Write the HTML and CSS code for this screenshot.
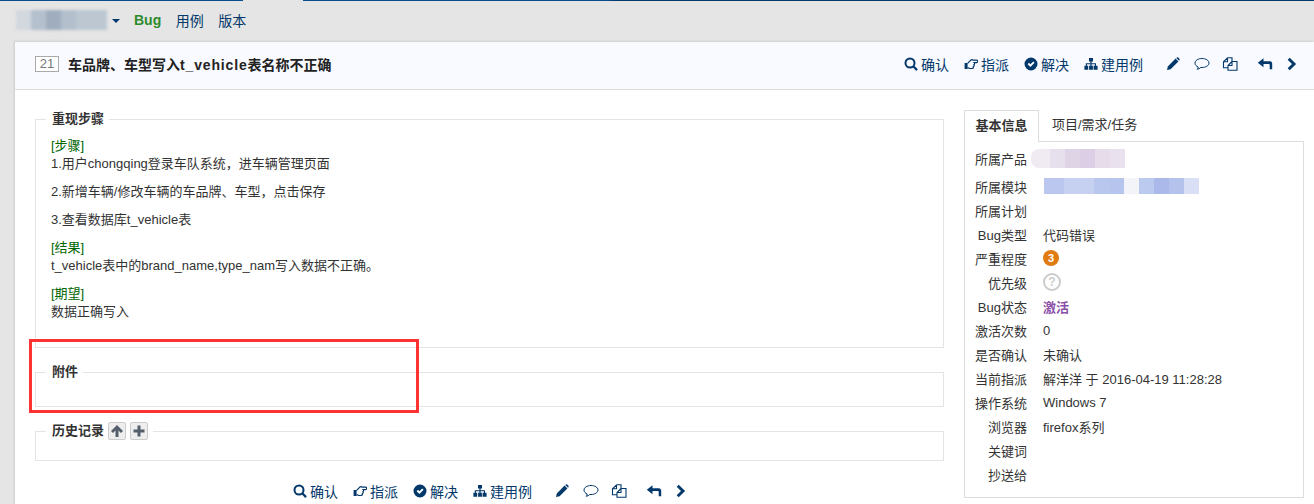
FILE: index.html
```html
<!DOCTYPE html>
<html lang="zh-CN">
<head>
    <meta charset="UTF-8">
    <meta name="viewport" content="width=device-width, initial-scale=1.0">
    <title>车品牌、车型写入t_vehicle表名称不正确</title>
    <link rel="stylesheet" href="styles.css">
</head>
<body>
    <svg class="defs" width="0" height="0">
        <symbol id="i-search" viewBox="0 0 14 14"><path d="M6 .5a5.500 5.500 0 1 0 0 11a5.500 5.500 0 0 0 0-11zm0 2a3.500 3.500 0 1 1 0 7a3.500 3.500 0 0 1 0-7z" fill-rule="evenodd"/><path d="M8.800 10.300l1.500-1.500 3.500 3.500-1.600 1.600z"/></symbol>
        <symbol id="i-hand" viewBox="0 0 14 14"><path d="M.6 6h3v6h-3z"/><path d="M3.600 6.400L6.800 3.200C7.200 2.400 8.500 2.400 9 3.200H12.600C14 3.200 14 5.600 12.600 5.600H10.200C10.800 6.200 10.600 7.300 10 7.600C10.400 8.300 10 9.300 9.400 9.500C9.600 10.500 9 11.500 8 11.500H5.800L3.600 10.600" fill="none" stroke="currentColor" stroke-width="1.200"/></symbol>
        <symbol id="i-check" viewBox="0 0 14 14"><path d="M7 .5a6.500 6.500 0 1 0 0 13a6.500 6.500 0 0 0 0-13zM3.600 7.200l1.400-1.400 1.400 1.400 2.800-2.800 1.400 1.400-4.200 4.200z" fill-rule="evenodd"/></symbol>
        <symbol id="i-sitemap" viewBox="0 0 14 14"><path d="M5 1h4v3.400H7.600v1.800h4.400v2.600h1.600v4h-4v-4h1.300V7.300H7.600v1.500h1.300v4H5.100v-4h1.300V7.300H2.900v1.500h1.300v4H.4v-4H1.800V6.200h4.600V4.400H5z"/></symbol>
        <symbol id="i-pencil" viewBox="0 0 14 14"><path d="M1 13l.8-3.600L9.600 1.600l2.800 2.800-7.800 7.800zM10.300.9l.7-.4c.5-.3 1-.2 1.400.2l1 1c.4.4.4 1 .1 1.400l-.4.7z"/></symbol>
        <symbol id="i-comment" viewBox="0 0 16 14"><path d="M8 1.500c3.700 0 7 1.900 7 4.500s-3.300 4.500-7 4.500h-1.200c-1 1-2.300 1.600-3.600 1.800.6-.6 1-1.400 1-2.300C2.300 9.300 1 7.800 1 6c0-2.600 3.300-4.500 7-4.500z" fill="none" stroke="currentColor" stroke-width="1"/></symbol>
        <symbol id="i-copy" viewBox="0 0 15 14"><path d="M5 .8H9.500V4.500M5 .8L1 4.800V10.800H5.500M1 4.800H5V.8M9.500 4.500L5.500 8.500V13.300H14.500V4.500H9.500M9.500 4.500V8.500H5.500" fill="none" stroke="currentColor" stroke-width="1.100"/></symbol>
        <symbol id="i-reply" viewBox="0 0 15 14"><path d="M.3 5.800L6 1.300v3h6.300c1.500 0 2.400 1 2.400 2.500v5.500h-2.500V7.800c0-.5-.2-.8-.8-.8H6v3.200z"/></symbol>
        <symbol id="i-next" viewBox="0 0 10 14"><path d="M2.700.8L9.100 7l-6.400 6.200L.7 11.200 5 7 .7 2.800z"/></symbol>
        <symbol id="i-up" viewBox="0 0 14 14"><path d="M7 1l6 6-2 2-2.500-2.500V13h-3V6.500L3 9 1 7z"/></symbol>
        <symbol id="i-plus" viewBox="0 0 14 14"><path d="M5.500 1.500h3v4h4v3h-4v4h-3v-4h-4v-3h4z"/></symbol>
    </svg>

    <div class="topline"><span class="seg-a"></span><span class="seg-b"></span><span class="seg-c"></span></div>

    <nav class="topnav">
        <div class="product-blur"><i></i><i></i><i></i><i></i><i></i></div>
        <span class="caret"></span>
        <a class="nav-link active">Bug</a>
        <a class="nav-link">用例</a>
        <a class="nav-link">版本</a>
    </nav>

    <div class="card">
        <header class="card-head">
            <div class="title-wrap">
                <span class="bug-id">21</span>
                <h1>车品牌、车型写入<span class="latin">t_vehicle</span>表名称不正确</h1>
            </div>
            <div class="toolbar">
                <a><svg class="ico"><use href="#i-search"/></svg>确认</a>
                <a><svg class="ico"><use href="#i-hand"/></svg>指派</a>
                <a><svg class="ico"><use href="#i-check"/></svg>解决</a>
                <a><svg class="ico"><use href="#i-sitemap"/></svg>建用例</a>
                <span class="tool-group">
                    <svg class="ico"><use href="#i-pencil"/></svg>
                    <svg class="ico wide"><use href="#i-comment"/></svg>
                    <svg class="ico wide"><use href="#i-copy"/></svg>
                </span>
                <span class="tool-group">
                    <svg class="ico wide"><use href="#i-reply"/></svg>
                    <svg class="ico narrow"><use href="#i-next"/></svg>
                </span>
            </div>
        </header>

        <div class="card-body">
            <main class="main-col">
                <fieldset class="steps">
                    <legend>重现步骤</legend>
                    <p><span class="tag">[步骤]</span><br>1.用户chongqing登录车队系统，进车辆管理页面</p>
                    <p>2.新增车辆/修改车辆的车品牌、车型，点击保存</p>
                    <p>3.查看数据库t_vehicle表</p>
                    <p><span class="tag">[结果]</span><br>t_vehicle表中的brand_name,type_nam写入数据不正确。</p>
                    <p><span class="tag">[期望]</span><br>数据正确写入</p>
                </fieldset>
                <fieldset class="files">
                    <legend>附件</legend>
                </fieldset>
                <fieldset class="history">
                    <legend>历史记录<span class="mini-btn"><svg><use href="#i-up"/></svg></span><span class="mini-btn"><svg><use href="#i-plus"/></svg></span></legend>
                </fieldset>
                <div class="toolbar bottom">
                    <a><svg class="ico"><use href="#i-search"/></svg>确认</a>
                    <a><svg class="ico"><use href="#i-hand"/></svg>指派</a>
                    <a><svg class="ico"><use href="#i-check"/></svg>解决</a>
                    <a><svg class="ico"><use href="#i-sitemap"/></svg>建用例</a>
                    <span class="tool-group">
                        <svg class="ico"><use href="#i-pencil"/></svg>
                        <svg class="ico wide"><use href="#i-comment"/></svg>
                        <svg class="ico wide"><use href="#i-copy"/></svg>
                    </span>
                    <span class="tool-group">
                        <svg class="ico wide"><use href="#i-reply"/></svg>
                        <svg class="ico narrow"><use href="#i-next"/></svg>
                    </span>
                </div>
            </main>

            <aside class="side-col">
                <div class="tabs">
                    <span class="tab active">基本信息</span>
                    <span class="tab">项目/需求/任务</span>
                </div>
                <div class="tab-panel">
                    <div class="row first"><span class="lbl">所属产品</span><span class="smear purple"><i></i><i></i><i></i><i></i><i></i><i></i></span></div>
                    <div class="row tall"><span class="lbl">所属模块</span><span class="smear blue"><i></i><i></i><i></i><i></i><i></i><i></i><i></i><i></i><i></i></span></div>
                    <div class="row"><span class="lbl">所属计划</span></div>
                    <div class="row"><span class="lbl">Bug类型</span><span>代码错误</span></div>
                    <div class="row"><span class="lbl">严重程度</span><span class="sev">3</span></div>
                    <div class="row"><span class="lbl">优先级</span><span class="pri">?</span></div>
                    <div class="row"><span class="lbl">Bug状态</span><span class="status">激活</span></div>
                    <div class="row"><span class="lbl">激活次数</span><span>0</span></div>
                    <div class="row"><span class="lbl">是否确认</span><span>未确认</span></div>
                    <div class="row"><span class="lbl">当前指派</span><span>解洋洋 于 2016-04-19 11:28:28</span></div>
                    <div class="row"><span class="lbl">操作系统</span><span>Windows 7</span></div>
                    <div class="row"><span class="lbl">浏览器</span><span>firefox系列</span></div>
                    <div class="row"><span class="lbl">关键词</span></div>
                    <div class="row"><span class="lbl">抄送给</span></div>
                </div>
            </aside>
        </div>
    </div>

    <div class="red-box"></div>
</body>
</html>
```

FILE: styles.css
```css
* {
    box-sizing: border-box;
}
html, body {
    height: 504px;
    overflow: hidden;
}
body {
    margin: 0;
    position: relative;
    background: #e5e5e5;
    font-family: "Liberation Sans", "Noto Sans CJK SC", sans-serif;
    font-size: 13px;
    color: #333;
}
.defs {
    position: absolute;
}

.topline {
    height: 1px;
    display: flex;
}
.seg-a {
    width: 243px;
    background: #0b4c8c;
}
.seg-b {
    width: 60px;
}
.seg-c {
    flex: 1;
    background: linear-gradient(to right, #0b4c8c 30%, #03386b 31%);
}

.topnav {
    height: 41px;
    padding: 0 0 3px 16px;
    display: flex;
    align-items: center;
}
.product-blur {
    width: 91px;
    height: 20px;
    display: flex;
    filter: blur(1.5px);
    border-radius: 8px 0 0 8px;
}
.product-blur i {
    height: 100%;
    width: 15px;
}
.product-blur i:nth-child(1) { background: #d3d8de; }
.product-blur i:nth-child(2) { background: #b4c0cd; }
.product-blur i:nth-child(3) { background: #9fadbe; }
.product-blur i:nth-child(4) { background: #b3bfcc; }
.product-blur i:nth-child(5) { background: #bcc7d2; width: 31px; }
.caret {
    width: 0;
    height: 0;
    margin: 2px 14px 0 5px;
    border: 4px solid transparent;
    border-top: 4px solid #03386b;
    border-bottom: 0;
}
.nav-link {
    margin-right: 14.5px;
    font-size: 14px;
    color: #03386b;
}
.nav-link.active {
    font-weight: bold;
    color: #2e8b2e;
}

.card {
    margin-left: 15px;
    background: #fff;
    box-shadow: -1px -1px 2px #ccc;
    height: 470px;
}
.card-head {
    height: 48px;
    padding: 0 17px 3px 20px;
    display: flex;
    justify-content: space-between;
    align-items: center;
    background: #f8faff;
    border-bottom: 1px solid #ddd;
}
.title-wrap {
    display: flex;
    align-items: center;
}
.bug-id {
    width: 24px;
    height: 16px;
    margin-right: 9px;
    border: 1px solid #aaa;
    background: #fff;
    color: #777;
    font-size: 13px;
    line-height: 14px;
    text-align: center;
}
h1 {
    margin: 0;
    font-size: 14px;
    font-weight: bold;
    color: #222;
}
.latin {
    letter-spacing: .85px;
}

.toolbar {
    display: flex;
    align-items: center;
    font-size: 14px;
    color: #03386b;
}
.toolbar a {
    display: flex;
    align-items: center;
    margin-right: 15px;
}
.ico {
    width: 14px;
    height: 14px;
    margin-right: 3px;
    fill: currentColor;
}
.tool-group {
    display: flex;
    align-items: center;
    margin-left: 8px;
    gap: 14px;
}
.tool-group + .tool-group {
    margin-left: 19px;
}
.tool-group .ico {
    margin-right: 0;
}
.ico.wide {
    width: 16px;
}
.ico.wide + .ico.wide {
    margin-left: -2px;
}
.ico.narrow {
    width: 10px;
}

.card-body {
    padding: 20px 10px 0 20px;
    display: flex;
    justify-content: space-between;
}
.main-col {
    width: 909px;
}
fieldset {
    margin: 0;
    padding: 0 15px;
    border: 1px solid #e4e4e4;
    min-width: 0;
}
legend {
    padding: 0 5px 0 6px;
    margin-left: -5px;
    font-weight: bold;
    font-size: 13px;
    line-height: 18px;
    color: #333;
    display: flex;
    align-items: center;
}
.steps {
    height: 238px;
    padding-top: 9px;
}
.steps p {
    margin: 0 0 10px;
    line-height: 18px;
    font-size: 13px;
}
.tag {
    color: #060;
}
.files {
    height: 44px;
    margin-top: 15px;
}
.history {
    height: 39px;
    margin-top: 15px;
}
.mini-btn {
    width: 18px;
    height: 18px;
    margin-left: 4px;
    display: inline-flex;
    align-items: center;
    justify-content: center;
    background: #eee;
    border: 1px solid #ccc;
    border-radius: 2px;
}
.mini-btn svg {
    width: 14px;
    height: 14px;
    fill: #555f6b;
}
.toolbar.bottom {
    justify-content: center;
    margin-top: 20px;
}

.side-col {
    width: 340px;
}
.tabs {
    display: flex;
    height: 32px;
    position: relative;
    z-index: 1;
}
.tab {
    padding: 4px 13px 0 13px;
    font-size: 13px;
    color: #333;
    white-space: nowrap;
}
.tab.active {
    width: 75px;
    padding: 4px 0 0;
    text-align: center;
    font-weight: bold;
    background: #fff;
    border: 1px solid #ddd;
    border-bottom: 0;
}
.tab-panel {
    height: 357px;
    margin-top: -1px;
    padding: 4px 0 0 10px;
    border: 1px solid #ddd;
}
.row {
    height: 24px;
    display: flex;
    align-items: center;
}
.row.tall {
    height: 28px;
    padding-top: 4px;
}
.lbl {
    width: 52px;
    margin-right: 16px;
    text-align: right;
    flex: none;
}
.smear {
    display: flex;
    height: 16px;
    filter: blur(.6px);
}
.smear i {
    width: 15px;
    height: 100%;
}
.purple {
    height: 19px;
    margin-left: -12px;
}
.blue {
    margin-left: 1px;
}
.purple i:nth-child(1) { background: #f0ebf3; width: 19px; border-radius: 8px 0 0 8px; }
.purple i:nth-child(2) { background: #e6dfec; }
.purple i:nth-child(3) { background: #dfd3e6; }
.purple i:nth-child(4) { background: #dccee4; }
.purple i:nth-child(5) { background: #e6dcea; }
.purple i:nth-child(6) { background: #e9e2ee; }
.blue i:nth-child(1) { background: #bbc7ee; width: 20px; }
.blue i:nth-child(2) { background: #c6d1f2; width: 30px; }
.blue i:nth-child(3) { background: #b9c6ee; }
.blue i:nth-child(4) { background: #b7c4ed; }
.blue i:nth-child(5) { background: #f3f4f8; }
.blue i:nth-child(6) { background: #bccaf0; }
.blue i:nth-child(7) { background: #abb9ea; }
.blue i:nth-child(8) { background: #b4c2ec; }
.blue i:nth-child(9) { background: #d9e0f6; }
.sev {
    width: 16px;
    height: 16px;
    border-radius: 50%;
    background: #e07b12;
    color: #fff;
    font-size: 11px;
    font-weight: bold;
    line-height: 16px;
    text-align: center;
}
.pri {
    width: 18px;
    height: 18px;
    border: 2px solid #ccc;
    border-radius: 50%;
    color: #ccc;
    font-size: 12px;
    font-weight: bold;
    line-height: 14px;
    text-align: center;
}
.status {
    font-weight: bold;
    color: #8b4fa8;
}

.red-box {
    position: absolute;
    left: 29px;
    top: 339px;
    width: 390px;
    height: 74px;
    border: 3px solid #f33;
}
```
